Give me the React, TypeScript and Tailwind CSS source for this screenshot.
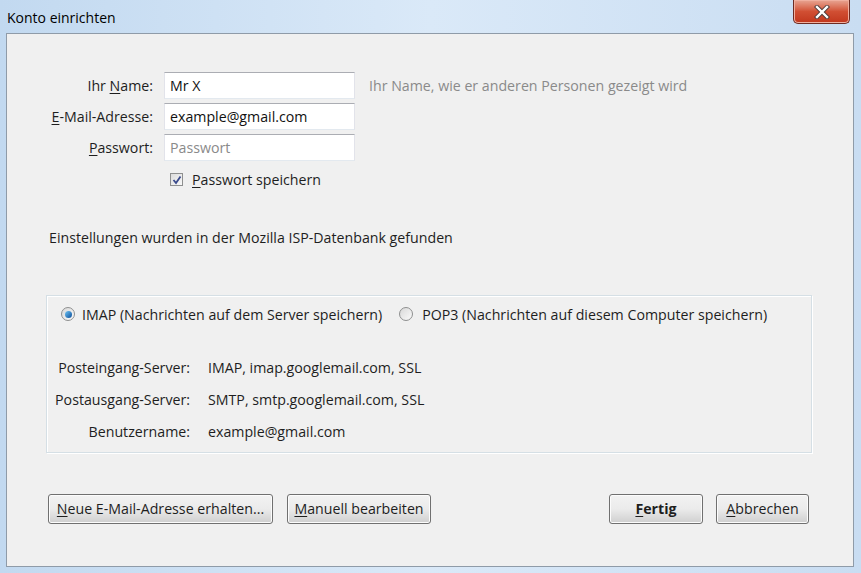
import React from 'react'

const FONT = { fontFamily: '"Open Sans", "Noto Sans", sans-serif' }

function U({ children }: { children: React.ReactNode }) {
  return <span className="underline underline-offset-2">{children}</span>
}

function TextInput({ value, placeholder }: { value?: string; placeholder?: string }) {
  return (
    <div className="flex h-[27px] w-[191px] items-center border border-t-[#abadb3] border-x-[#e2e3ea] border-b-[#e3e9ef] bg-white px-[5px] text-[14.2px]">
      {value ? (
        <span className="text-[#111]">{value}</span>
      ) : (
        <span className="text-[#8a8a8a]">{placeholder}</span>
      )}
    </div>
  )
}

function Button({ children, width, bold }: { children: React.ReactNode; width: string; bold?: boolean }) {
  return (
    <button
      type="button"
      className={`flex h-[30px] ${width} items-center justify-center rounded-[3px] border border-[#707070] bg-gradient-to-b from-[#f2f2f2] via-[#ebebeb] to-[#cfcfcf] text-[14.2px] text-[#1e1e1e] shadow-[inset_0_0_0_1px_#fcfcfc] ${bold ? 'font-bold' : ''}`}
    >
      {children}
    </button>
  )
}

function Radio({ checked }: { checked?: boolean }) {
  return (
    <span className="flex h-[14px] w-[14px] items-center justify-center rounded-full border border-[#8e8f8f] bg-gradient-to-br from-[#d8d8d8] to-[#fbfbfb]">
      {checked && (
        <span className="h-[7px] w-[7px] rounded-full bg-gradient-to-br from-[#6ec4f4] to-[#0a4e99]" />
      )}
    </span>
  )
}

export default function App() {
  return (
    <div
      className="flex h-[573px] w-[861px] flex-col bg-gradient-to-r from-[#c2d9f0] via-[#dae9f8] to-[#c9ddf2] text-[14.2px] text-[#1e1e1e]"
      style={FONT}
    >
      {/* title bar */}
      <div className="flex h-[33px] shrink-0 items-start justify-between">
        <span className="pl-[7px] pt-[8px] text-[14px] leading-[20px] text-black">Konto einrichten</span>
        <div className="mr-[11px] flex h-[24px] w-[57px] items-center justify-center rounded-b-[5px] border border-t-0 border-[#6d2b22] bg-gradient-to-b from-[#e7a593] via-[#d14f33] to-[#c1361c] shadow-[inset_0_0_0_1px_#f0b0a0]">
          <svg width="16" height="14" viewBox="0 0 16 14">
            <path d="M3 2 L13 12 M13 2 L3 12" stroke="#4a3a3a" strokeWidth="4.2" strokeLinecap="square" />
            <path d="M3 2 L13 12 M13 2 L3 12" stroke="#ffffff" strokeWidth="2.4" strokeLinecap="square" />
          </svg>
        </div>
      </div>

      {/* content */}
      <div className="mb-[6px] ml-[6px] mr-[7px] flex flex-1 flex-col border border-[#8f9ba8] bg-[#f0f0f0]">
        {/* account form */}
        <div className="mt-[38px] grid grid-cols-[146px_191px_auto] items-center gap-x-[11px] gap-y-[4px]">
          <span className="text-right">Ihr <U>N</U>ame:</span>
          <TextInput value="Mr X" />
          <span className="ml-[3px] text-[#8a8a8a]">Ihr Name, wie er anderen Personen gezeigt wird</span>

          <span className="text-right"><U>E</U>-Mail-Adresse:</span>
          <TextInput value="example@gmail.com" />
          <span />

          <span className="text-right"><U>P</U>asswort:</span>
          <TextInput placeholder="Passwort" />
          <span />
        </div>

        <div className="ml-[163px] mt-[8px] flex items-center gap-[9px]">
          <span className="flex h-[13px] w-[13px] items-center justify-center border border-[#8e8f8f] bg-gradient-to-br from-[#dcdcdc] to-[#f8f8f8]">
            <svg width="10" height="10" viewBox="0 0 10 10">
              <path d="M1.5 5 L4 8 L8.5 1.5" stroke="#3a4a8c" strokeWidth="1.8" fill="none" />
            </svg>
          </span>
          <span><U>P</U>asswort speichern</span>
        </div>

        <p className="ml-[42px] mt-[37px]">Einstellungen wurden in der Mozilla ISP-Datenbank gefunden</p>

        {/* settings group */}
        <div className="ml-[39px] mr-[41px] mt-[46px] h-[158px] border border-[#d5dfe5] shadow-[inset_1px_1px_0_#ffffff,1px_1px_0_#ffffff]">
          <div className="ml-[14px] mt-[8px] flex items-center">
            <Radio checked />
            <span className="ml-[7px]">IMAP (Nachrichten auf dem Server speichern)</span>
            <span className="ml-[17px]" />
            <Radio />
            <span className="ml-[9px]">POP3 (Nachrichten auf diesem Computer speichern)</span>
          </div>

          <div className="mt-[32px] grid grid-cols-[143px_auto] gap-x-[18px] gap-y-[11px]">
            <span className="text-right">Posteingang-Server:</span>
            <span>IMAP, imap.googlemail.com, SSL</span>
            <span className="text-right">Postausgang-Server:</span>
            <span>SMTP, smtp.googlemail.com, SSL</span>
            <span className="text-right">Benutzername:</span>
            <span>example@gmail.com</span>
          </div>
        </div>

        {/* buttons */}
        <div className="ml-[41px] mr-[44px] mt-[41px] flex">
          <Button width="w-[225px]"><U>N</U>eue E-Mail-Adresse erhalten...</Button>
          <span className="w-[14px]" />
          <Button width="w-[144px]"><U>M</U>anuell bearbeiten</Button>
          <span className="flex-1" />
          <Button width="w-[94px]" bold><U>F</U>ertig</Button>
          <span className="w-[13px]" />
          <Button width="w-[93px]"><U>A</U>bbrechen</Button>
        </div>
      </div>
    </div>
  )
}
